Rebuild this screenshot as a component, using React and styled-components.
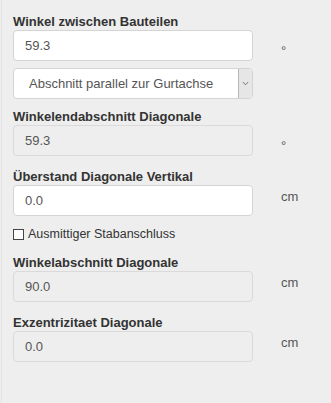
import React from "react";
import styled, { createGlobalStyle } from "styled-components";

const GlobalStyle = createGlobalStyle`
  html, body {
    margin: 0;
    padding: 0;
    background: #eeeeee;
  }
  body {
    font-family: "Liberation Sans", Arial, sans-serif;
    color: #333;
  }
`;

const Panel = styled.div`
  min-height: 403px;
  box-sizing: border-box;
  padding: 14px 0 0 11px;
  margin-left: 1px;
  border-left: 1px solid #e3e3e3;
`;

const Group = styled.div`
  margin-bottom: ${(p) => p.gap || 11}px;
`;

const Label = styled.div`
  font-size: 13px;
  font-weight: bold;
  line-height: 15px;
  margin-bottom: 1px;
  color: #333;
`;

const Row = styled.div`
  display: flex;
  align-items: flex-start;
`;

const Input = styled.input`
  box-sizing: border-box;
  width: 240px;
  height: 31px;
  margin: 0;
  padding: 0 11px;
  font-family: inherit;
  font-size: 13px;
  color: #555;
  background: ${(p) => (p.disabled ? "#eeeeee" : "#fff")};
  border: 1px solid ${(p) => (p.disabled ? "#dadada" : "#d4d4d4")};
  border-radius: 4px;
  outline: none;
`;

const Unit = styled.span`
  margin-left: 28px;
  padding-top: ${(p) => (p.degree ? 13 : 4)}px;
  font-size: 13px;
  line-height: 15px;
  color: #555;
`;

const SelectBox = styled.div`
  box-sizing: border-box;
  width: 240px;
  height: 31px;
  margin-top: 7px;
  display: flex;
  background: #fff;
  border: 1px solid #d4d4d4;
  border-radius: 4px;
`;

const SelectText = styled.div`
  flex: 1;
  padding-left: 15px;
  font-size: 13px;
  line-height: 29px;
  color: #555;
`;

const SelectArrow = styled.div`
  width: 13px;
  display: flex;
  align-items: center;
  justify-content: center;
  background: #e6e6e6;
  border-left: 1px solid #b8b8b8;
  border-radius: 0 3px 3px 0;
`;

const CheckRow = styled.label`
  display: flex;
  align-items: center;
  margin-bottom: 13px;
  font-size: 12.5px;
  line-height: 16px;
  color: #333;
`;

const Box = styled.span`
  box-sizing: border-box;
  width: 11px;
  height: 11px;
  margin-right: 4px;
  background: #fff;
  border: 1px solid #444;
`;

const Field = ({ label, value, unit, disabled, gap, children }) => (
  <Group gap={gap}>
    <Label>{label}</Label>
    <Row>
      <Input defaultValue={value} disabled={disabled} />
      <Unit degree={unit === "°"}>{unit}</Unit>
    </Row>
    {children}
  </Group>
);

export default function App() {
  return (
    <>
      <GlobalStyle />
      <Panel>
        <Field label="Winkel zwischen Bauteilen" value="59.3" unit="°" gap={10}>
          <SelectBox>
            <SelectText>Abschnitt parallel zur Gurtachse</SelectText>
            <SelectArrow>
              <svg width="7" height="5" viewBox="0 0 7 5">
                <path d="M0.8 1 L3.5 3.8 L6.2 1" fill="none" stroke="#777" strokeWidth="1" />
              </svg>
            </SelectArrow>
          </SelectBox>
        </Field>
        <Field label="Winkelendabschnitt Diagonale" value="59.3" unit="°" disabled gap={13} />
        <Field label="Überstand Diagonale Vertikal" value="0.0" unit="cm" gap={10} />
        <CheckRow>
          <Box />
          Ausmittiger Stabanschluss
        </CheckRow>
        <Field label="Winkelabschnitt Diagonale" value="90.0" unit="cm" disabled gap={13} />
        <Field label="Exzentrizitaet Diagonale" value="0.0" unit="cm" disabled />
      </Panel>
    </>
  );
}
